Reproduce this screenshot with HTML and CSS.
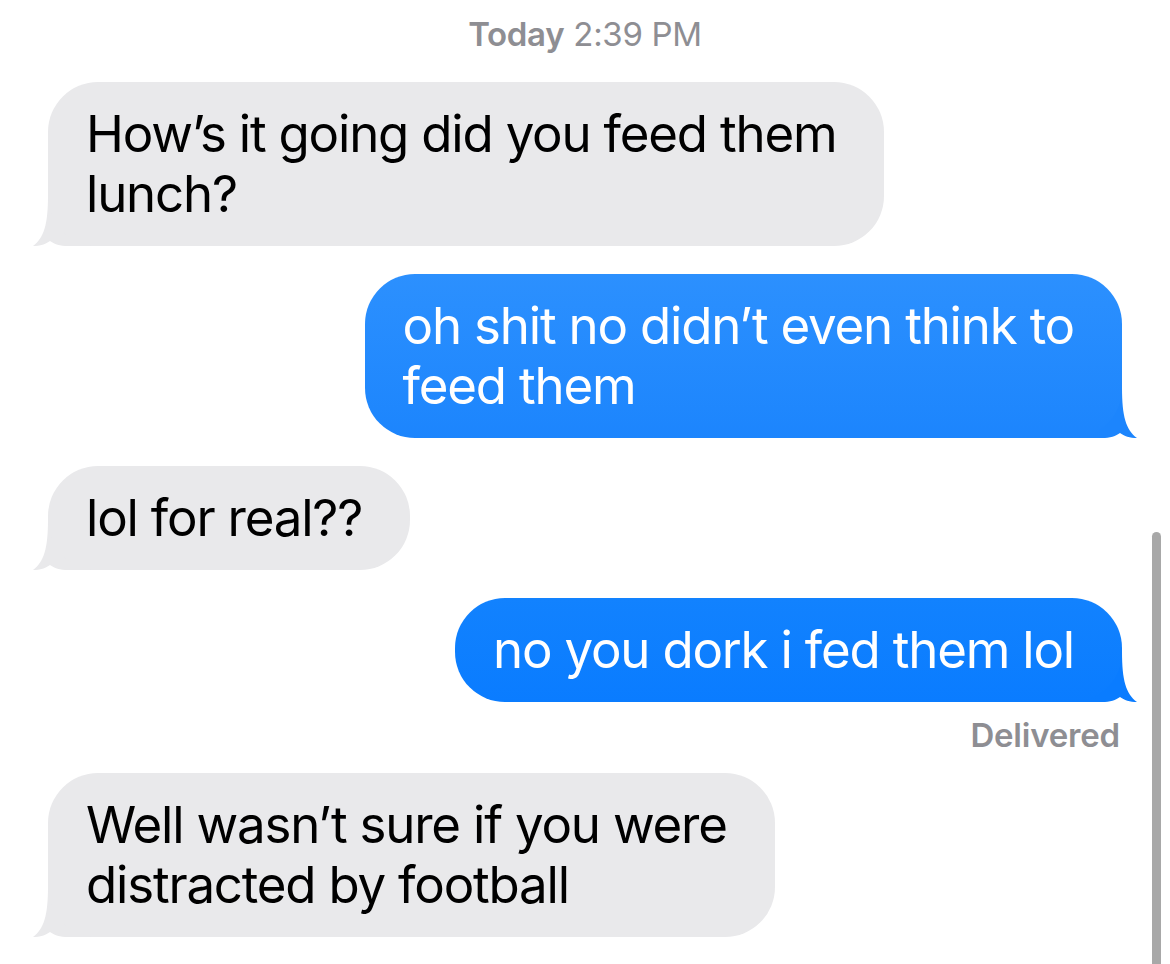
FILE: index.html
```html
<!DOCTYPE html>
<html lang="en">
<head>
  <meta charset="UTF-8" />
  <meta name="viewport" content="width=device-width, initial-scale=1.0"/>
  <title>Messages</title>
  <link rel="stylesheet" href="styles.css">
</head>
<body>
  <div class="thread">
    <p class="timestamp"><b>Today</b> 2:39 PM</p>

    <div class="msg them">
      How’s it going did you feed them<br>lunch?
      <svg class="tail" viewBox="0 0 70 50" width="70" height="50"><path d="M16 0 C16 28 12 42 1 50 C8 50 14 48 18 45 C22 48 28 50 36 50 L70 50 L70 0 Z"/></svg>
    </div>

    <div class="msg me top">
      oh shit no didn’t even think to<br>feed them
      <svg class="tail" viewBox="0 0 70 50" width="70" height="50"><path d="M16 0 C16 28 12 42 1 50 C8 50 14 48 18 45 C22 48 28 50 36 50 L70 50 L70 0 Z"/></svg>
    </div>

    <div class="msg them">
      lol for real??
      <svg class="tail" viewBox="0 0 70 50" width="70" height="50"><path d="M16 0 C16 28 12 42 1 50 C8 50 14 48 18 45 C22 48 28 50 36 50 L70 50 L70 0 Z"/></svg>
    </div>

    <div class="msg me">
      no you dork i fed them lol
      <svg class="tail" viewBox="0 0 70 50" width="70" height="50"><path d="M16 0 C16 28 12 42 1 50 C8 50 14 48 18 45 C22 48 28 50 36 50 L70 50 L70 0 Z"/></svg>
    </div>
    <p class="status">Delivered</p>

    <div class="msg them">
      Well wasn’t sure if you were<br>distracted by football
      <svg class="tail" viewBox="0 0 70 50" width="70" height="50"><path d="M16 0 C16 28 12 42 1 50 C8 50 14 48 18 45 C22 48 28 50 36 50 L70 50 L70 0 Z"/></svg>
    </div>
  </div>

  <div class="scrollbar"></div>
</body>
</html>
```

FILE: styles.css
```css
* {
  box-sizing: border-box;
  margin: 0;
  padding: 0;
}

body {
  font-family: Inter, 'Noto Sans', sans-serif;
  background: #fff;
  width: 1170px;
  height: 964px;
  overflow: hidden;
  position: relative;
}

.thread {
  display: flex;
  flex-direction: column;
  padding: 14px 48px 0;
}

.timestamp {
  align-self: center;
  font-size: 33px;
  line-height: 40px;
  color: #8e8e93;
  letter-spacing: -0.3px;
}

.timestamp b {
  font-weight: 600;
}

.msg {
  position: relative;
  margin-top: 28px;
  padding: 22px 48px 22px 38px;
  border-radius: 50px;
  font-size: 51px;
  line-height: 60px;
  letter-spacing: -1.2px;
  --tail: #e9e9eb;
}

/* tail sits behind the bubble body */
.msg .tail {
  position: absolute;
  bottom: 0;
  z-index: -1;
  fill: var(--tail);
}

.them {
  align-self: flex-start;
  background: #e9e9eb;
  color: #000;
}

.them .tail {
  left: -16px;
}

.me {
  align-self: flex-end;
  color: #fff;
  background: linear-gradient(to bottom, #1282fe, #0a7cff);
  --tail: #0a7cff;
}

.me.top {
  background: linear-gradient(to bottom, #2c90fe, #1c85fd);
  --tail: #1c85fd;
}

.me .tail {
  right: -16px;
  transform: scaleX(-1);
}

.status {
  align-self: flex-end;
  margin-top: 13px;
  margin-right: 2px;
  font-size: 33px;
  line-height: 40px;
  font-weight: 600;
  color: #8e8e93;
  letter-spacing: -0.2px;
}

.status + .msg {
  margin-top: 18px;
}

.scrollbar {
  position: absolute;
  left: 1152px;
  top: 532px;
  width: 9px;
  height: 440px;
  border-radius: 5px;
  background: #a8a8a8;
}
```
